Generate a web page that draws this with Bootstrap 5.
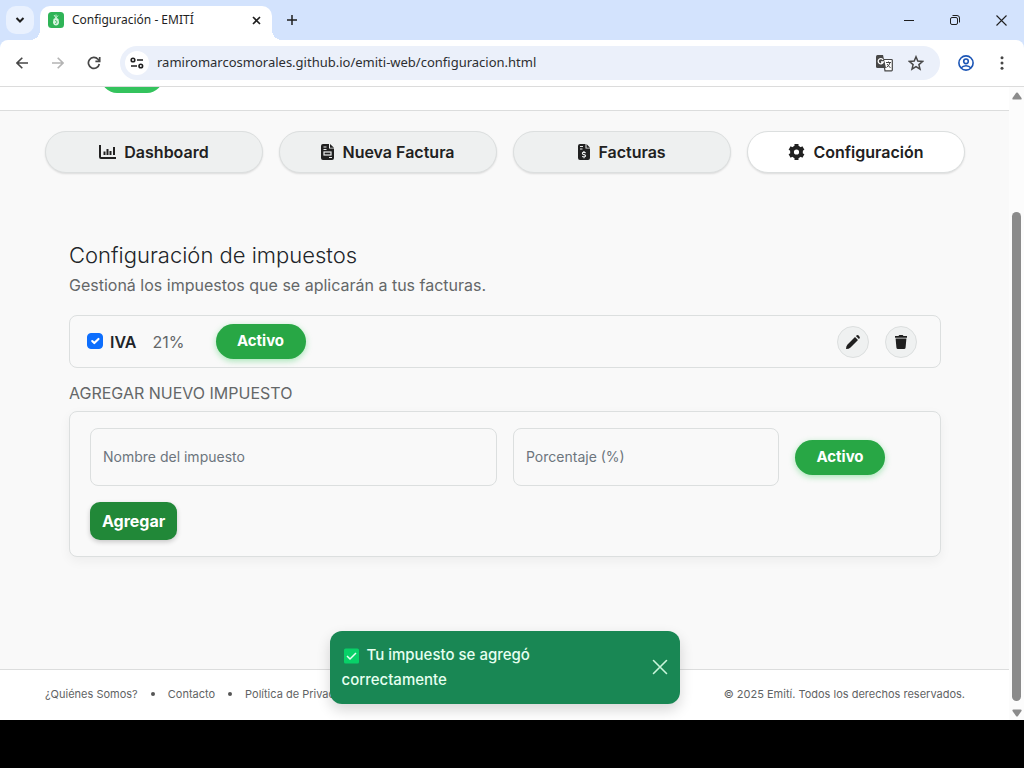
<!DOCTYPE html>
<html lang="es">
<head>
<meta charset="utf-8">
<meta name="viewport" content="width=device-width, initial-scale=1">
<title>Configuración - EMITÍ</title>
<link href="https://cdn.jsdelivr.net/npm/bootstrap@5.3.0/dist/css/bootstrap.min.css" rel="stylesheet">
<style>
  body { font-family: Inter, "Liberation Sans", sans-serif; color: #212529; background: #000; }
  svg { display: block; flex: none; }
  .line-icon { fill: none; stroke: currentColor; }

  /* browser frame */
  .chrome-ui { font-family: "Noto Sans", "Open Sans", sans-serif; color: #1f1f1f; }
  .chrome-ui button { border: 0; padding: 0; background: none; color: inherit; display: flex; align-items: center; justify-content: center; }
  .tab-strip { background: #d3e3fd; height: 40px; padding: 6px 8px 0 6px; }
  .chrome-ui .tab-search { width: 28px; height: 28px; border-radius: 10px; background: #e9f1fe; }
  .browser-tab { width: 232px; height: 34px; margin-left: 6px; padding: 0 8px 6px; background: #fff; border-radius: 10px 10px 0 0; position: relative; font-size: 12px; }
  .browser-tab::before, .browser-tab::after { content: ""; position: absolute; bottom: 0; width: 10px; height: 10px; }
  .browser-tab::before { right: 100%; background: radial-gradient(circle at 0 0, transparent 10px, #fff 10px); }
  .browser-tab::after { left: 100%; background: radial-gradient(circle at 100% 0, transparent 10px, #fff 10px); }
  .chrome-ui .tab-close { width: 16px; height: 16px; }
  .chrome-ui .new-tab { width: 40px; height: 28px; }
  .chrome-ui .win-btn { width: 46px; height: 28px; }
  .strip-end { margin-right: -8px; }
  .toolbar-wrap { background: #d3e3fd; }
  .tool-row { background: #fff; height: 47px; border-radius: 8px 8px 0 0; border-bottom: 1px solid #dcdcdc; padding: 0 4px; }
  .chrome-ui .tool-btn { width: 36px; height: 32px; color: #474747; }
  .chrome-ui .tool-btn:disabled { color: #b4b4b4; }
  .address { background: #ebf0fa; height: 34px; border-radius: 17px; padding: 0 8px 0 5px; margin: 0 8px; }
  .chrome-ui .site-info { width: 24px; height: 24px; border-radius: 50%; background: #fff; }
  .address input { border: 0; background: none; outline: 0; font-size: 13px; color: #2c2e31; padding: 0 0 0 8px; min-width: 0; }
  .chrome-ui .addr-btn { width: 32px; height: 32px; color: #474747; }

  /* page */
  .page-view { background: #f9f9f9; overflow: hidden; }
  .site-header { height: 24px; background: #fff; border-bottom: 1px solid #dcdddd; padding: 0 45px 17px; }
  .brand-mark { width: 62px; height: 44px; margin-left: 56px; border-radius: 16px; background: #34c35d; }
  .page-nav { padding: 20px 44px 0 45px; }
  .page-nav a { height: 42px; border-radius: 21px; border: 1px solid #dcdfdf; background: #eef0f0; color: #212121; font-size: 16px; font-weight: 600; text-decoration: none; box-shadow: 0 1px 2px rgba(0,0,0,.12); }
  .page-nav a.active { background: #fff; }
  .tax-section { padding: 68px 68px 0 69px; }
  .tax-section h1 { font-size: 22px; line-height: 28px; font-weight: 300; margin-bottom: 4px; }
  .tax-intro, .form-title { font-size: 16px; line-height: 24px; font-weight: 400; color: #646768; }
  .tax-intro { margin-bottom: 18px; }
  .form-title { margin: 13px 0 6px; }
  .panel { border: 1px solid #dcdfdf; border-radius: 8px; background: #f9f9f9; }
  .tax-item { padding: 8px 23px 8px 17px; }
  .tax-item .form-check-input { width: 16px; height: 16px; margin: 0 7px 2px 0; }
  .tax-item label { font-size: 16px; font-weight: 600; }
  .tax-rate { color: #646768; margin-left: 16px; }
  .btn-state, .btn-state:hover { width: 90px; height: 35px; border-radius: 18px; border: 0; padding: 0; background: #28a745; color: #fff; font-size: 15px; font-weight: 700; box-shadow: 0 2px 6px rgba(40,200,80,.4); }
  .tax-item .btn-state { margin-left: 31px; }
  .btn-round { width: 32px; height: 32px; border-radius: 50%; border: 1px solid #dcdfdf; background: #eff1f1; color: #1f1f1f; padding: 0; }
  .add-form { padding: 16px 20px; box-shadow: 0 4px 12px rgba(0,0,0,.05); }
  .add-form .form-control { border-color: #dcdfdf; border-radius: 8px; background: #f9f9f9; }
  .add-form label { font-size: 14px; color: #6c757d; line-height: 24px; }
  .btn-add, .btn-add:hover { height: 38px; padding: 0 12px; border: 0; border-radius: 10px; background: #218838; color: #fff; font-size: 16px; font-weight: 700; box-shadow: 0 2px 5px rgba(0,0,0,.2); }
  .site-footer { height: 51px; border-top: 1px solid #dcdddd; background: #fff; padding: 0 44px 2px 45px; font-size: 11px; color: #5f6364; }
  .site-footer a { color: inherit; text-decoration: none; }
  .dot-sep { width: 4px; height: 4px; border-radius: 50%; background: #555; margin: 0 13px; }
  .notice { position: absolute; left: 0; right: 0; bottom: 16px; margin: 0 auto; width: 350px; border-radius: 12px; background: #198754; color: #e6fff0; padding: 11px 12px 12px; font-size: 15px; line-height: 25px; font-weight: 500; box-shadow: 0 6px 14px rgba(0,0,0,.16); }
  .notice-text { width: 220px; }
  .notice-icon { margin: 0 8px 0 2px; }
  .notice button { border: 0; background: none; padding: 0; color: #c8f5da; }
  .scroll-rail { width: 15px; background: #fcfcfc; color: #8b8b8b; padding: 5px 0 3px; }
  .rail-gap { flex: 112; }
  .rail-thumb { flex: 488; width: 9px; border-radius: 5px; background: #8b8b8b; }
  .bottom-band { height: 48px; background: #000; }
</style>
</head>
<body>
<div class="d-flex flex-column vh-100">
  <div class="chrome-ui">
    <div class="tab-strip d-flex">
      <button class="tab-search" type="button" aria-label="Buscar pestañas"><svg class="line-icon" width="10" height="8" viewBox="0 0 10 8" stroke-width="2"><path d="M1.5 2 5 5.500 8.500 2"/></svg></button>
      <div class="browser-tab d-flex align-items-center">
        <svg width="16" height="16" viewBox="0 0 16 16"><rect width="16" height="16" rx="3.500" fill="#2fb457"/><path d="M5.500 7q2.500-1.800 5 0l.5 3.500Q10.500 13.500 8 13.500T5 10.500z" fill="#d8f5e0"/><path d="m8 6-2-3M8 6V2.500M8 6l2-2.500" stroke="#c8f0d4" fill="none"/><path d="M7 8.500q2 0 2 1.500T7 11.500" fill="none" stroke="#2fb457" stroke-width=".8"/></svg>
        <span class="ms-2 me-auto">Configuración - EMITÍ</span>
        <button class="tab-close" type="button" aria-label="Cerrar pestaña"><svg class="line-icon" width="9" height="9" viewBox="0 0 9 9" stroke-width="1.600"><path d="m1 1 7 7M8 1 1 8"/></svg></button>
      </div>
      <button class="new-tab" type="button" aria-label="Nueva pestaña"><svg class="line-icon" width="12" height="12" viewBox="0 0 12 12" stroke-width="1.500"><path d="M6 1v10M1 6h10"/></svg></button>
      <div class="strip-end d-flex ms-auto">
        <button class="win-btn" type="button" aria-label="Minimizar"><svg class="line-icon" width="10" height="10" viewBox="0 0 10 10"><path d="M0 5.500h10"/></svg></button>
        <button class="win-btn" type="button" aria-label="Restaurar"><svg class="line-icon" width="10" height="10" viewBox="0 0 10 10"><rect x=".5" y="2.500" width="7" height="7" rx="1.500"/><path d="M2.500.5H7A2.500 2.500 0 0 1 9.500 3v4.500"/></svg></button>
        <button class="win-btn" type="button" aria-label="Cerrar"><svg class="line-icon" width="11" height="11" viewBox="0 0 11 11" stroke-width="1.100"><path d="m.5.5 10 10M10.500.5l-10 10"/></svg></button>
      </div>
    </div>
    <div class="toolbar-wrap">
      <div class="tool-row d-flex align-items-center">
        <button class="tool-btn" type="button" aria-label="Atrás"><svg class="line-icon" width="12" height="12" viewBox="0 0 12 12" stroke-width="1.600"><path d="M12 6H1M6.300.7 1 6l5.300 5.300"/></svg></button>
        <button class="tool-btn" type="button" disabled aria-label="Adelante"><svg class="line-icon" width="12" height="12" viewBox="0 0 12 12" stroke-width="1.600"><path d="M0 6h11M5.700.7 11 6l-5.300 5.300"/></svg></button>
        <button class="tool-btn" type="button" aria-label="Recargar"><svg class="line-icon" width="14" height="14" viewBox="0 0 14 14" stroke-width="1.700"><path d="M12.300 8A5.500 5.500 0 1 1 11 3.200l1.500 1.600"/><path d="M12.700 1v4.300H8.400"/></svg></button>
        <div class="address d-flex align-items-center flex-grow-1">
          <button class="site-info" type="button" aria-label="Información del sitio"><svg class="line-icon" width="14" height="12" viewBox="0 0 14 12" stroke-width="1.600"><circle cx="3" cy="3" r="1.800"/><path d="M7 3h6M1 9h6"/><circle cx="10.800" cy="9" r="1.800"/></svg></button>
          <input class="flex-grow-1" type="text" aria-label="Dirección" value="ramiromarcosmorales.github.io/emiti-web/configuracion.html">
          <button class="addr-btn" type="button" aria-label="Traducir"><svg width="17" height="17" viewBox="0 0 17 17"><path d="M7 4.500h8.500q.8 0 .8.800V15q0 .8-.8.800H9z" fill="#fff" stroke="#474747" stroke-width="1.200"/><path d="M1.500 0H7l3 13H1.500Q0 13 0 11.500v-10Q0 0 1.500 0z" fill="#474747"/><path d="M7 4.800A2.600 2.600 0 1 0 7.300 7H5" fill="none" stroke="#fff" stroke-width="1.300"/><path d="M10 7.500h5M12.500 6.500v1M14 7.500q-.5 3-3.500 5M11 9l3.500 4" fill="none" stroke="#474747"/></svg></button>
          <button class="addr-btn" type="button" aria-label="Favorito"><svg class="line-icon" width="16" height="16" viewBox="0 0 16 16" stroke-width="1.500"><path d="m8 1.800 1.800 4.300 4.700.4-3.600 3.100 1.100 4.600L8 11.700l-4 2.500 1.100-4.600-3.600-3.100 4.700-.4z"/></svg></button>
        </div>
        <button class="tool-btn" type="button" aria-label="Perfil"><svg width="16" height="16" viewBox="0 0 16 16" fill="none" stroke="#1b55b5" stroke-width="1.600"><circle cx="8" cy="8" r="7.100"/><circle cx="8" cy="6.300" r="2.300"/><path d="M3 13q2-2.300 5-2.300t5 2.300"/></svg></button>
        <button class="tool-btn" type="button" aria-label="Menú"><svg width="4" height="14" viewBox="0 0 4 14" fill="currentColor"><circle cx="2" cy="1.700" r="1.500"/><circle cx="2" cy="7" r="1.500"/><circle cx="2" cy="12.300" r="1.500"/></svg></button>
      </div>
    </div>
  </div>

  <div class="d-flex flex-grow-1 overflow-hidden">
    <div class="page-view d-flex flex-column flex-grow-1 position-relative">
      <header class="site-header d-flex align-items-end overflow-hidden flex-shrink-0"><div class="brand-mark flex-shrink-0"></div></header>
      <nav class="page-nav d-flex gap-3">
        <a href="#" class="d-flex flex-fill w-25 gap-2 align-items-center justify-content-center"><svg class="line-icon" width="17" height="16" viewBox="0 0 17 16" stroke-width="2"><path d="M1 1v12q0 1 1 1h15"/><path d="M5.500 7.500V11M8.500 5v6M11.500 7v4M15 3v8"/></svg>Dashboard</a>
        <a href="#" class="d-flex flex-fill w-25 gap-2 align-items-center justify-content-center"><svg width="13" height="16" viewBox="0 0 13 16"><path d="M2 0h6v4.500h5V14q0 2-2 2H2q-2 0-2-2V2Q0 0 2 0zM9 0l4 3.800H9z" fill="currentColor"/><path d="M2.500 3h3M2.500 5.500h3M8 13.500h3" stroke="#eef0f0" fill="none" stroke-width="1.200"/><rect x="3" y="8" width="7" height="3" fill="none" stroke="#eef0f0" stroke-width="1.200"/></svg>Nueva Factura</a>
        <a href="#" class="d-flex flex-fill w-25 gap-2 align-items-center justify-content-center"><svg width="12" height="16" viewBox="0 0 12 16"><path d="M2 0h5.500v4.500H12V14q0 2-2 2H2q-2 0-2-2V2Q0 0 2 0zM8.500 0 12 3.700H8.500z" fill="currentColor"/><path d="M2 2.500h3M2 5h2.500M6 7v1.200M6 13v1.200M7.800 8.800q-3.400-1.100-3.400.6 0 .9 1.600 1.200t1.600 1.200q0 1.700-3.500.6" stroke="#eef0f0" fill="none" stroke-width="1.100"/></svg>Facturas</a>
        <a href="#" class="active d-flex flex-fill w-25 gap-2 align-items-center justify-content-center" aria-current="page"><svg class="line-icon" width="17" height="16" viewBox="0 0 16 16"><circle cx="8" cy="8" r="4.500" stroke-width="3.800"/><path d="M8 0v3M8 13v3M1.100 4l2.600 1.500M12.300 10.500l2.600 1.500M14.900 4l-2.600 1.500M3.700 10.500 1.100 12" stroke-width="4"/></svg>Configuración</a>
      </nav>

      <main class="tax-section">
        <h1>Configuración de impuestos</h1>
        <p class="tax-intro">Gestioná los impuestos que se aplicarán a tus facturas.</p>
        <div class="panel tax-item d-flex align-items-center">
          <input class="form-check-input" type="checkbox" id="tax-iva" checked>
          <label for="tax-iva">IVA</label>
          <span class="tax-rate">21%</span>
          <button type="button" class="btn btn-state">Activo</button>
          <div class="d-flex gap-3 ms-auto">
            <button type="button" class="btn-round d-flex align-items-center justify-content-center" aria-label="Editar"><svg width="16" height="16" viewBox="0 0 16 16" fill="currentColor"><path d="m10 3 3 3-7.500 7.500Q4 15 1 15q0-3 1.500-4.500zM10.900 2.100l.6-.6q1.500-1 2.500.5 1.500 1 .5 2.500l-.6.6z"/></svg></button>
            <button type="button" class="btn-round d-flex align-items-center justify-content-center" aria-label="Eliminar"><svg width="14" height="16" viewBox="0 0 14 16" fill="currentColor"><path d="M1 2h3.500l.8-1h3.400l.8 1H13v1.700H1zM1.600 4.500h10.800l-.8 9q-.1 1.500-1.600 1.500H4q-1.500 0-1.600-1.500z"/></svg></button>
          </div>
        </div>
        <h2 class="form-title">AGREGAR NUEVO IMPUESTO</h2>
        <form class="panel add-form">
          <div class="row g-3 align-items-center">
            <div class="col-6"><div class="form-floating"><input type="text" class="form-control" id="tax-name" placeholder="Nombre"><label for="tax-name">Nombre del impuesto</label></div></div>
            <div class="col-4"><div class="form-floating"><input type="text" class="form-control" id="tax-percent" placeholder="Porcentaje"><label for="tax-percent">Porcentaje (%)</label></div></div>
            <div class="col-2"><button type="button" class="btn btn-state">Activo</button></div>
            <div class="col-12"><button type="button" class="btn btn-add">Agregar</button></div>
          </div>
        </form>
      </main>

      <footer class="site-footer d-flex align-items-center mt-auto flex-shrink-0">
        <a href="#">¿Quiénes Somos?</a><span class="dot-sep"></span><a href="#">Contacto</a><span class="dot-sep"></span><a href="#">Política de Privacidad</a>
        <span class="ms-auto">© 2025 Emití. Todos los derechos reservados.</span>
      </footer>

      <div class="notice d-flex align-items-center justify-content-between" role="status">
        <div class="notice-text"><svg class="notice-icon d-inline-block align-text-bottom" width="15" height="16" viewBox="0 0 15 16"><rect width="15" height="15" y=".5" rx="1.500" fill="#08d168"/><path d="m3 8 3 3 6-6" fill="none" stroke="#e6fff0" stroke-width="1.500"/></svg>Tu impuesto se agregó correctamente</div>
        <button type="button" aria-label="Cerrar aviso"><svg class="line-icon" width="16" height="16" viewBox="0 0 16 16" stroke-width="1.600" stroke-linecap="round"><path d="m1.500 1.500 13 13M14.500 1.500l-13 13"/></svg></button>
      </div>
    </div>
    <div class="scroll-rail d-flex flex-column align-items-center flex-shrink-0" aria-hidden="true">
      <svg width="10" height="8" viewBox="0 0 10 8"><path d="M4.200.8q.8-.8 1.600 0L9.500 6q.5 1.500-1 1.500h-7Q0 7.500.5 6z" fill="currentColor"/></svg>
      <div class="rail-gap"></div>
      <div class="rail-thumb"></div>
      <svg class="mt-2" width="10" height="8" viewBox="0 0 10 8"><path d="M4.200 7.200q.8.800 1.600 0L9.500 2q.5-1.500-1-1.500h-7Q0 .5.500 2z" fill="currentColor"/></svg>
    </div>
  </div>
  <div class="bottom-band flex-shrink-0"></div>
</div>
<script src="https://cdn.jsdelivr.net/npm/bootstrap@5.3.0/dist/js/bootstrap.bundle.min.js"></script>
</body>
</html>
